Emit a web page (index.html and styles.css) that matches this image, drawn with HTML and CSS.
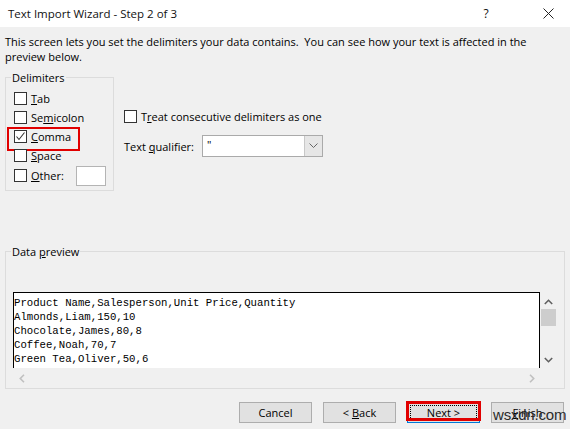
FILE: index.html
```html
<!DOCTYPE html>
<html>
<head>
<meta charset="utf-8">
<link rel="stylesheet" href="styles.css">
</head>
<body>
<div class="titlebar">
  <span class="title">Text Import Wizard - Step 2 of 3</span>
  <span class="tb-btn help">?</span>
  <span class="tb-btn close">
    <svg width="11" height="11" viewBox="0 0 11 11"><path d="M0.5 0.5 L10.5 10.5 M10.5 0.5 L0.5 10.5" stroke="#222" stroke-width="1" fill="none"/></svg>
  </span>
</div>
<p class="desc">This screen lets you set the delimiters your data contains.&nbsp; You can see how your text is affected in the<br>preview below.</p>
<div class="options">
  <div class="group delims">
    <span class="legend">Delimiters</span>
    <div class="row"><span class="cb"></span><span><u>T</u>ab</span></div>
    <div class="row"><span class="cb"></span><span>Se<u>m</u>icolon</span></div>
    <div class="row marked"><span class="cb checked"><svg width="11" height="11" viewBox="0 0 11 11"><path d="M1.5 5.5 L4 8.5 L9.5 1.5" stroke="#333" stroke-width="1.1" fill="none"/></svg></span><span><u>C</u>omma</span></div>
    <div class="row"><span class="cb"></span><span><u>S</u>pace</span></div>
    <div class="row other"><span class="cb"></span><span><u>O</u>ther:</span><span class="textbox"></span></div>
  </div>
  <div class="right-col">
    <div class="row"><span class="cb"></span><span>T<u>r</u>eat consecutive delimiters as one</span></div>
    <div class="qualifier">
      <span class="q-label">Text <u>q</u>ualifier:</span>
      <div class="combo">
        <span class="combo-val">"</span>
        <span class="dd"><svg width="9" height="6" viewBox="0 0 9 6"><path d="M0.5 0.5 L4.5 4.5 L8.5 0.5" stroke="#666" stroke-width="1" fill="none"/></svg></span>
      </div>
    </div>
  </div>
</div>
<div class="group preview">
  <span class="legend">Data <u>p</u>review</span>
  <div class="pv-area">
    <div class="pv-box"><pre>Product Name,Salesperson,Unit Price,Quantity
Almonds,Liam,150,10
Chocolate,James,80,8
Coffee,Noah,70,7
Green Tea,Oliver,50,6</pre></div>
    <div class="vscroll">
      <span class="arrow up"><svg width="9" height="6" viewBox="0 0 9 6"><path d="M0.8 5 L4.5 1.3 L8.2 5" stroke="#606060" stroke-width="1.6" fill="none"/></svg></span>
      <span class="thumb"></span>
      <span class="arrow down"><svg width="9" height="6" viewBox="0 0 9 6"><path d="M0.8 1 L4.5 4.7 L8.2 1" stroke="#606060" stroke-width="1.6" fill="none"/></svg></span>
    </div>
  </div>
  <div class="hscroll">
    <span class="harrow"><svg width="6" height="9" viewBox="0 0 6 9"><path d="M5 0.8 L1.3 4.5 L5 8.2" stroke="#c0c0c0" stroke-width="1.6" fill="none"/></svg></span>
    <span class="harrow"><svg width="6" height="9" viewBox="0 0 6 9"><path d="M1 0.8 L4.7 4.5 L1 8.2" stroke="#c0c0c0" stroke-width="1.6" fill="none"/></svg></span>
  </div>
</div>
<div class="buttons">
  <span class="btn"><span>Cancel</span></span>
  <span class="btn"><span>&lt;&nbsp;<u>B</u>ack</span></span>
  <span class="btn default"><span class="focus"><span><u>N</u>ext&nbsp;&gt;</span></span></span>
  <span class="btn finish"><span><u>F</u>inish</span><span class="watermark">wsxdn.com</span></span>
</div>
</body>
</html>
```
FILE: styles.css
```css
* { box-sizing: border-box; }
html, body { margin: 0; padding: 0; }
body {
  width: 570px;
  height: 429px;
  overflow: hidden;
  background: #f0f0f0;
  font-family: "Open Sans", "Noto Sans", sans-serif;
  font-size: 11px;
  color: #000;
}
.titlebar {
  height: 27px;
  background: #fff;
  display: flex;
  align-items: center;
  padding-left: 8px;
  font-size: 11.5px;
  color: #111;
}
.title { flex: 1; }
.tb-btn {
  width: 20px;
  display: flex;
  justify-content: center;
  align-items: center;
}
.help { margin-right: 42px; font-size: 12px; }
.close { margin-right: 12px; }

.desc {
  margin: 7px 5px 0;
  line-height: 15px;
}
.options {
  display: flex;
  margin-top: 13px;
  padding-left: 5px;
}
.group {
  position: relative;
  border: 1px solid #dcdcdc;
}
.legend {
  position: absolute;
  top: -8px;
  left: 5px;
  padding: 0 1px;
  line-height: 15px;
  background: #f0f0f0;
}
.delims {
  width: 109px;
  height: 114px;
  padding: 11px 0 0 8px;
}
.row {
  display: flex;
  align-items: center;
  height: 19px;
  gap: 4px;
  position: relative;
}
.cb {
  width: 13px;
  height: 13px;
  border: 1px solid #333;
  background: #fff;
  display: flex;
  align-items: center;
  justify-content: center;
  flex: none;
}
.marked::after {
  content: "";
  position: absolute;
  left: -7px;
  top: 0;
  width: 69px;
  height: 20px;
  border: 2px solid #e10000;
}
.other { height: 21px; }
.textbox {
  width: 30px;
  height: 20px;
  margin-left: auto;
  margin-right: 7px;
  background: #fff;
  border: 1px solid #b4b4b4;
}
.right-col {
  margin-left: 10px;
  padding-top: 30px;
}
.qualifier {
  display: flex;
  align-items: center;
  margin-top: 9px;
}
.q-label { width: 78px; }
.combo {
  width: 121px;
  height: 22px;
  display: flex;
  background: #fff;
  border: 1px solid #aaa;
}
.combo-val { flex: 1; padding-left: 4px; line-height: 18px; }
.dd {
  width: 18px;
  background: #e6e6e6;
  border-left: 1px solid #c8c8c8;
  display: flex;
  align-items: center;
  justify-content: center;
}

.preview {
  margin: 60px 0 0 5px;
  width: 560px;
  padding: 40px 0 0 7px;
}
.pv-area { display: flex; height: 76px; }
.pv-box {
  width: 527px;
  background: #fff;
  border: 1px solid #000;
  border-bottom: none;
  padding-top: 3px;
  overflow: hidden;
}
.pv-box pre {
  margin: 0;
  font-family: "Liberation Mono", monospace;
  font-size: 10.67px;
  line-height: 14px;
}
.vscroll {
  width: 17px;
  position: relative;
  display: flex;
  flex-direction: column;
  align-items: center;
}
.arrow { height: 17px; display: flex; align-items: center; justify-content: center; }
.arrow.up { margin-top: 1px; }
.thumb { width: 15px; height: 17px; background: #cdcdcd; margin-top: -1px; }
.arrow.down { margin-top: auto; margin-bottom: 0; }
.hscroll {
  width: 527px;
  height: 20px;
  display: flex;
  justify-content: space-between;
  align-items: center;
}
.harrow { width: 17px; display: flex; justify-content: center; }

.buttons {
  display: flex;
  gap: 11px;
  margin-top: 13px;
  padding-left: 239px;
}
.btn {
  position: relative;
  width: 73px;
  height: 21px;
  background: #e1e1e1;
  border: 1px solid #adadad;
  display: flex;
  align-items: center;
  justify-content: center;
}
.default { border-color: #0078d7; }
.default::after {
  content: "";
  position: absolute;
  left: -2px;
  right: -2px;
  top: -2px;
  bottom: 1px;
  border: 3px solid #e10000;
}
.focus {
  position: absolute;
  inset: 2px;
  border: 1px dotted #000;
  display: flex;
  align-items: center;
  justify-content: center;
}
.watermark {
  position: absolute;
  left: 1px;
  top: 3px;
  font-family: "Liberation Sans", sans-serif;
  font-size: 15px;
  color: #2a2a2a;
  letter-spacing: -0.2px;
}
```
